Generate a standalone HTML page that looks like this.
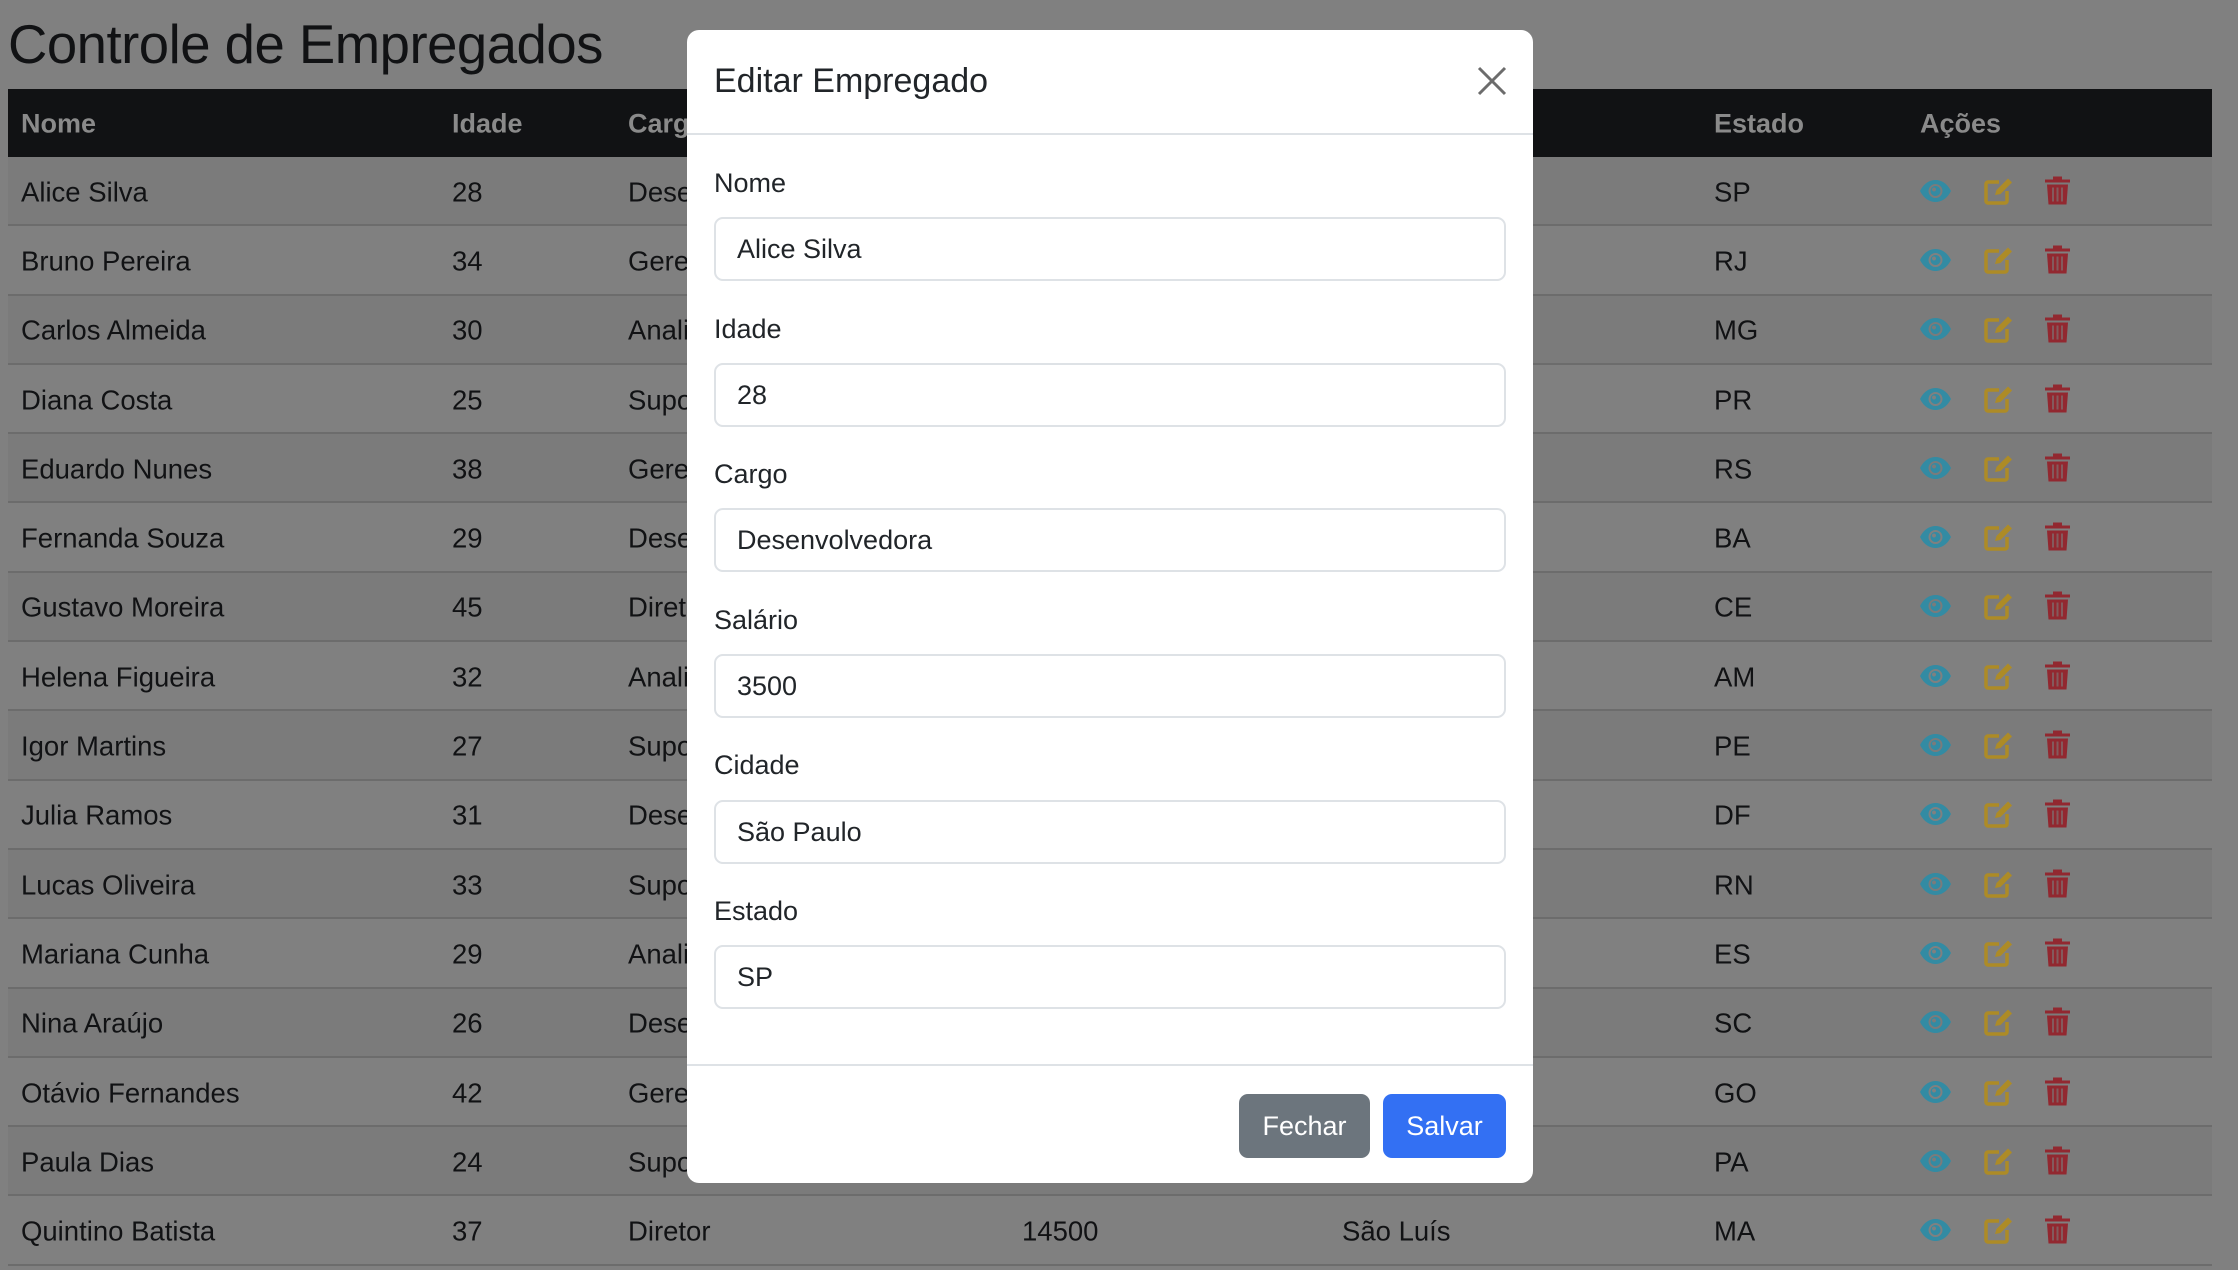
<!DOCTYPE html>
<html><head><meta charset="utf-8"><style>
*{box-sizing:border-box;margin:0;padding:0}
body{width:2238px;height:1270px;overflow:hidden;background:#808080;font-family:"Liberation Sans",Arial,sans-serif;color:#111214;position:relative}
h1{position:absolute;left:8px;top:13px;font-size:54.5px;font-weight:400;letter-spacing:-0.5px;color:#111214}
.thead{position:absolute;left:8px;top:89px;width:2204px;height:68px;background:#111214;color:#8a8a8a;font-weight:700;font-size:27px}
.c{position:absolute;white-space:nowrap}
.row{position:absolute;left:8px;width:2204px;height:69.3px;border-bottom:2px solid #6c6c6c;font-size:27.5px}
.row:nth-child(odd){background:#7b7b7b}
.row .c,.thead .c{top:50%;transform:translateY(-46%)}
.ic{position:absolute;top:50%;transform:translateY(-50%)}
.modal{position:absolute;left:687px;top:30px;width:846px;height:1153px;background:#fff;border-radius:12px;overflow:hidden}
.mh{height:105px;border-bottom:2px solid #dee2e6;position:relative}
.mh h2{position:absolute;left:27px;top:32px;font-size:34px;font-weight:400;color:#212529}
.lbl{position:absolute;left:27px;font-size:27px;color:#212529}
.inp{position:absolute;left:27px;width:792px;height:64px;border:2px solid #dee2e6;border-radius:9px;font-size:27px;color:#212529;padding-left:21px;line-height:60px}
.mf{position:absolute;left:0;top:1034px;width:100%;border-top:2px solid #dee2e6;height:119px}
.btn{position:absolute;top:28px;height:64px;border-radius:9px;color:#fff;font-size:27px;text-align:center;line-height:64px}
</style></head><body>
<h1>Controle de Empregados</h1>
<div class="thead">
<span class="c" style="left:13px">Nome</span><span class="c" style="left:444px">Idade</span><span class="c" style="left:620px">Cargo</span><span class="c" style="left:1014px">Salário</span><span class="c" style="left:1334px">Cidade</span><span class="c" style="left:1706px">Estado</span><span class="c" style="left:1912px">Ações</span>
</div>
<div id="rows" style="position:absolute;left:0;top:157px">
</div>
<script>
var d=[["Alice Silva",28,"Desenvolvedora",3500,"São Paulo","SP"],["Bruno Pereira",34,"Gerente",8000,"Rio de Janeiro","RJ"],["Carlos Almeida",30,"Analista",5000,"Belo Horizonte","MG"],["Diana Costa",25,"Suporte",2800,"Curitiba","PR"],["Eduardo Nunes",38,"Gerente",9000,"Porto Alegre","RS"],["Fernanda Souza",29,"Desenvolvedora",4800,"Salvador","BA"],["Gustavo Moreira",45,"Diretor",15000,"Fortaleza","CE"],["Helena Figueira",32,"Analista",5200,"Manaus","AM"],["Igor Martins",27,"Suporte",3000,"Recife","PE"],["Julia Ramos",31,"Desenvolvedora",5100,"Brasília","DF"],["Lucas Oliveira",33,"Suporte",3200,"Natal","RN"],["Mariana Cunha",29,"Analista",4900,"Vitória","ES"],["Nina Araújo",26,"Desenvolvedora",4000,"Florianópolis","SC"],["Otávio Fernandes",42,"Gerente",9500,"Goiânia","GO"],["Paula Dias",24,"Suporte",2700,"Belém","PA"],["Quintino Batista",37,"Diretor",14500,"São Luís","MA"]];
var eye='<svg class="ic" style="left:1911px" width="33" height="22" viewBox="0 0 33 22"><path fill-rule="evenodd" fill="#338ba3" d="M1 11C5 3 11 0 16.5 0S28 3 32 11c-4 8-10 11-15.5 11S5 19 1 11zM16.5 4a7 7 0 1 0 0.01 0zM16.5 6a5 5 0 1 1-0.01 0zM15 7.5a2 2 0 1 0 0.01 0z"/></svg>';
var pen='<svg class="ic" style="left:1976px" width="29" height="28" viewBox="0 0 29 28"><path d="M15 5H4a2 2 0 0 0-2 2v17a2 2 0 0 0 2 2h17a2 2 0 0 0 2-2V14" fill="none" stroke="#ad8b26" stroke-width="3.5"/><path d="M11 18l1.5-5L24 1.5l4 4L16.5 17z" fill="#ad8b26"/></svg>';
var tr='<svg class="ic" style="left:2037px" width="25" height="29" viewBox="0 0 25 29"><rect x="0" y="3" width="25" height="3" fill="#922830"/><rect x="8" y="0" width="9" height="4" fill="#922830"/><path d="M2 8h21l-1.5 20h-18z" fill="#922830"/><rect x="7" y="11" width="2" height="14" fill="#7b7b7b" opacity=".6"/><rect x="11.5" y="11" width="2" height="14" fill="#7b7b7b" opacity=".6"/><rect x="16" y="11" width="2" height="14" fill="#7b7b7b" opacity=".6"/></svg>';
var h='';d.forEach(function(r,i){h+='<div class="row" style="top:'+(i*69.3)+'px"><span class="c" style="left:13px">'+r[0]+'</span><span class="c" style="left:444px">'+r[1]+'</span><span class="c" style="left:620px">'+r[2]+'</span><span class="c" style="left:1014px">'+r[3]+'</span><span class="c" style="left:1334px">'+r[4]+'</span><span class="c" style="left:1706px">'+r[5]+'</span>'+eye+pen+tr+'</div>';});
document.getElementById('rows').innerHTML=h;
</script>
<div class="modal">
<div class="mh"><h2>Editar Empregado</h2>
<svg style="position:absolute;left:790px;top:36px" width="30" height="30" viewBox="0 0 30 30"><path d="M2 2L28 28M28 2L2 28" stroke="#6c6c6c" stroke-width="3"/></svg></div>
<div class="lbl" style="top:138px">Nome</div><div class="inp" style="top:187px">Alice Silva</div>
<div class="lbl" style="top:284px">Idade</div><div class="inp" style="top:333px">28</div>
<div class="lbl" style="top:429px">Cargo</div><div class="inp" style="top:478px">Desenvolvedora</div>
<div class="lbl" style="top:575px">Salário</div><div class="inp" style="top:624px">3500</div>
<div class="lbl" style="top:720px">Cidade</div><div class="inp" style="top:770px">São Paulo</div>
<div class="lbl" style="top:866px">Estado</div><div class="inp" style="top:915px">SP</div>
<div class="mf"><div class="btn" style="left:552px;width:131px;background:#6c757d">Fechar</div><div class="btn" style="left:696px;width:123px;background:#3370f3">Salvar</div></div>
</div>
</body></html>
